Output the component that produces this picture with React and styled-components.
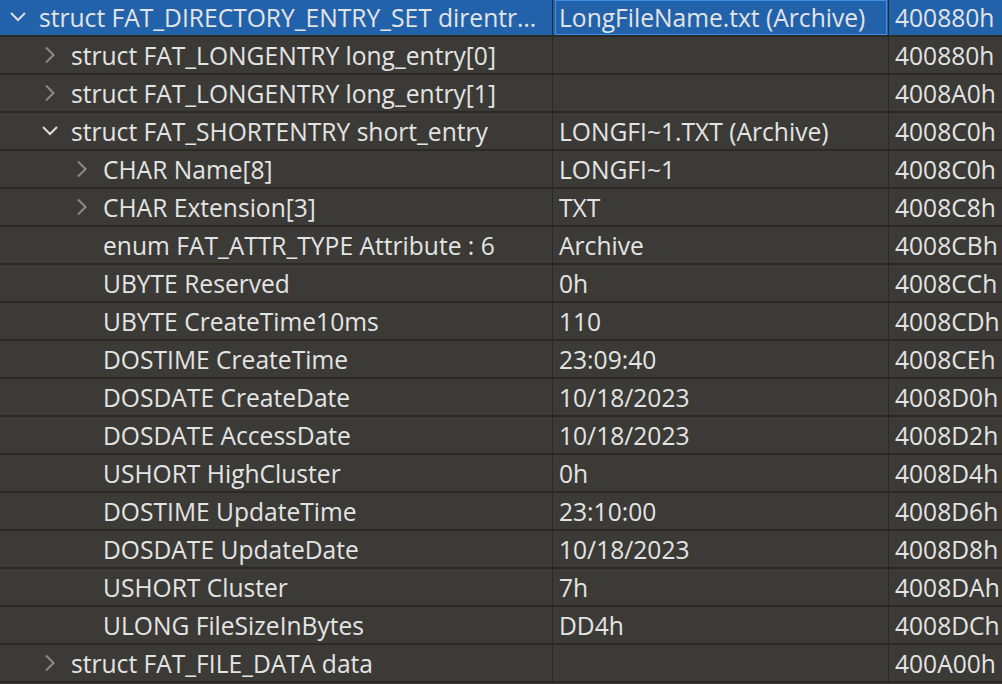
import React from "react";
import styled, { createGlobalStyle } from "styled-components";

const Global = createGlobalStyle`
  html, body { margin: 0; padding: 0; background: #3b3a36; }
  body { overflow: hidden; }
`;

const Table = styled.div`
  display: grid;
  grid-template-columns: 553px 336px 1fr;
  width: 1002px;
  height: 685px;
  margin-top: -1px;
  overflow: hidden;
  background: #3b3a36;
  font-family: "Open Sans", "Noto Sans", sans-serif;
  font-size: 24.6px;
  color: #e4e4e4;
  align-content: start;
`;

const Row = styled.div`
  display: contents;
`;

const Cell = styled.div`
  box-sizing: border-box;
  height: 38px;
  border-right: 1px solid #2a2926;
  border-bottom: 2px solid #2a2926;
  background: ${(p) => (p.$selected ? "#2262ab" : "transparent")};
  display: flex;
  align-items: center;
  padding-left: 6px;
  white-space: nowrap;
  overflow: hidden;
  position: relative;
  &:last-child { border-right: none; }
`;

const FocusCell = styled(Cell)`
  &::after {
    content: "";
    position: absolute;
    left: 2px;
    top: 1px;
    right: 1px;
    bottom: 0;
    border: 1px solid #3e90e6;
    pointer-events: none;
  }
`;

const NameCell = styled(Cell)`
  padding-left: ${(p) => 10 + p.$level * 32}px;
  padding-right: 6px;
`;

const Toggle = styled.span`
  flex: 0 0 16px;
  width: 16px;
  height: 18px;
  margin-right: 13px;
  display: flex;
  align-items: center;
  justify-content: center;
  svg { display: block; }
`;

const Label = styled.span`
  overflow: hidden;
  text-overflow: ellipsis;
  min-width: 0;
`;

function Chevron({ open }) {
  if (open === undefined) return <Toggle />;
  return (
    <Toggle>
      {open ? (
        <svg width="16" height="18" viewBox="0 0 16 18">
          <polyline points="1,5 8,12 15,5" fill="none" stroke="#dcdcdc" strokeWidth="2" />
        </svg>
      ) : (
        <svg width="16" height="18" viewBox="0 0 16 18">
          <polyline points="4,1.5 11.5,9 4,16.5" fill="none" stroke="#8a8a8a" strokeWidth="2" />
        </svg>
      )}
    </Toggle>
  );
}

const rows = [
  { l: 0, open: true, name: "struct FAT_DIRECTORY_ENTRY_SET direntry_set", value: "LongFileName.txt (Archive)", start: "400880h", selected: true },
  { l: 1, open: false, name: "struct FAT_LONGENTRY long_entry[0]", value: "", start: "400880h" },
  { l: 1, open: false, name: "struct FAT_LONGENTRY long_entry[1]", value: "", start: "4008A0h" },
  { l: 1, open: true, name: "struct FAT_SHORTENTRY short_entry", value: "LONGFI~1.TXT (Archive)", start: "4008C0h" },
  { l: 2, open: false, name: "CHAR Name[8]", value: "LONGFI~1", start: "4008C0h" },
  { l: 2, open: false, name: "CHAR Extension[3]", value: "TXT", start: "4008C8h" },
  { l: 2, name: "enum FAT_ATTR_TYPE Attribute : 6", value: "Archive", start: "4008CBh" },
  { l: 2, name: "UBYTE Reserved", value: "0h", start: "4008CCh" },
  { l: 2, name: "UBYTE CreateTime10ms", value: "110", start: "4008CDh" },
  { l: 2, name: "DOSTIME CreateTime", value: "23:09:40", start: "4008CEh" },
  { l: 2, name: "DOSDATE CreateDate", value: "10/18/2023", start: "4008D0h" },
  { l: 2, name: "DOSDATE AccessDate", value: "10/18/2023", start: "4008D2h" },
  { l: 2, name: "USHORT HighCluster", value: "0h", start: "4008D4h" },
  { l: 2, name: "DOSTIME UpdateTime", value: "23:10:00", start: "4008D6h" },
  { l: 2, name: "DOSDATE UpdateDate", value: "10/18/2023", start: "4008D8h" },
  { l: 2, name: "USHORT Cluster", value: "7h", start: "4008DAh" },
  { l: 2, name: "ULONG FileSizeInBytes", value: "DD4h", start: "4008DCh" },
  { l: 1, open: false, name: "struct FAT_FILE_DATA data", value: "", start: "400A00h" },
];

export default function App() {
  return (
    <>
      <Global />
      <Table>
        {rows.map((r, i) => {
          const ValueCell = r.selected ? FocusCell : Cell;
          return (
            <Row key={i}>
              <NameCell $level={r.l} $selected={r.selected}>
                <Chevron open={r.open} />
                <Label>{r.name}</Label>
              </NameCell>
              <ValueCell $selected={r.selected}>{r.value}</ValueCell>
              <Cell $selected={r.selected}>{r.start}</Cell>
            </Row>
          );
        })}
      </Table>
    </>
  );
}
